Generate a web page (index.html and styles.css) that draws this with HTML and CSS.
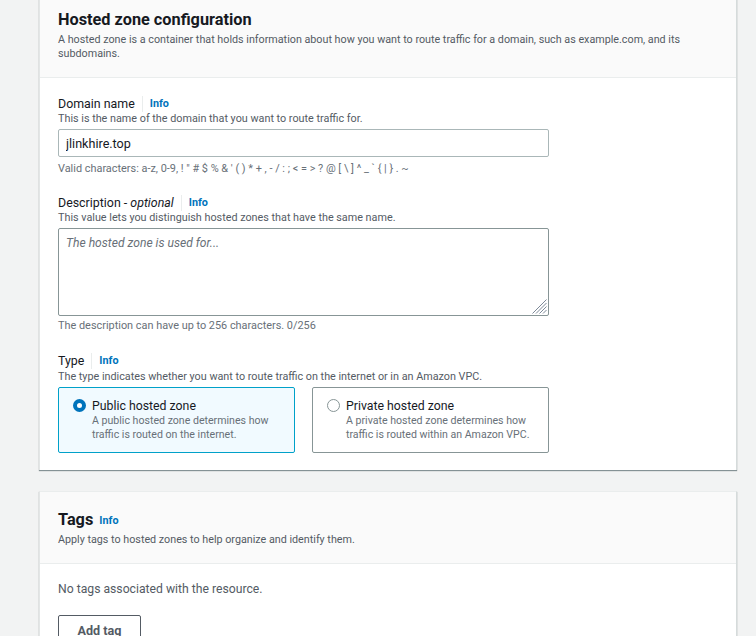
FILE: index.html
```html
<!DOCTYPE html>
<html>
<head>
<meta charset="utf-8">
<link rel="stylesheet" href="styles.css">
</head>
<body>
<div class="page">
  <section class="card card-first">
    <header class="card-header">
      <h2 class="card-title">Hosted zone configuration</h2>
      <p class="card-desc">A hosted zone is a container that holds information about how you want to route traffic for a domain, such as example.com, and its subdomains.</p>
    </header>
    <div class="card-body">
      <div class="field">
        <div class="label-row"><span class="label">Domain name</span><span class="info">Info</span></div>
        <div class="hint">This is the name of the domain that you want to route traffic for.</div>
        <input class="input" type="text" value="jlinkhire.top">
        <div class="constraint">Valid characters: a-z, 0-9, ! " # $ % &amp; ' ( ) * + , - / : ; &lt; = &gt; ? @ [ \ ] ^ _ ` { | } . ~</div>
      </div>
      <div class="field field-desc">
        <div class="label-row"><span class="label">Description - <i>optional</i></span><span class="info">Info</span></div>
        <div class="hint">This value lets you distinguish hosted zones that have the same name.</div>
        <div class="textarea-wrap">
          <textarea class="textarea" placeholder="The hosted zone is used for..."></textarea>
          <svg class="grip" width="16" height="16" viewBox="0 0 16 16"><g stroke="#7d8998" stroke-width="1"><line x1="15.5" y1="1.5" x2="1.5" y2="15.5"/><line x1="15.5" y1="5" x2="5" y2="15.5"/><line x1="15.5" y1="8.5" x2="8.5" y2="15.5"/><line x1="15.5" y1="12" x2="12" y2="15.5"/></g></svg>
        </div>
        <div class="constraint constraint-tight">The description can have up to 256 characters. 0/256</div>
      </div>
      <div class="field">
        <div class="label-row"><span class="label">Type</span><span class="info">Info</span></div>
        <div class="hint hint-type">The type indicates whether you want to route traffic on the internet or in an Amazon VPC.</div>
        <div class="tiles">
          <div class="tile tile-selected">
            <span class="radio radio-on"></span>
            <div class="tile-text">
              <div class="tile-title">Public hosted zone</div>
              <div class="tile-desc">A public hosted zone determines how traffic is routed on the internet.</div>
            </div>
          </div>
          <div class="tile">
            <span class="radio"></span>
            <div class="tile-text">
              <div class="tile-title">Private hosted zone</div>
              <div class="tile-desc">A private hosted zone determines how traffic is routed within an Amazon VPC.</div>
            </div>
          </div>
        </div>
      </div>
    </div>
  </section>

  <section class="card card-tags">
    <header class="card-header tags-header">
      <h2 class="card-title">Tags <span class="info info-title">Info</span></h2>
      <p class="card-desc">Apply tags to hosted zones to help organize and identify them.</p>
    </header>
    <div class="card-body tags-body">
      <div class="empty">No tags associated with the resource.</div>
      <button class="btn">Add tag</button>
    </div>
  </section>
</div>
</body>
</html>
```

FILE: styles.css
```css
* { box-sizing: border-box; }
html, body { margin: 0; padding: 0; }
body {
  background: #f2f3f3;
  font-family: Roboto, "Noto Sans", sans-serif;
  color: #16191f;
  height: 636px;
  overflow: hidden;
}
.page {
  padding-left: 39px;
  width: 737px;
}
.card {
  background: #fff;
  border-left: 1px solid #e3e6e6;
  border-right: 1px solid #d5dbdb;
  box-shadow: 0 1px 1px 0 rgba(0, 28, 36, 0.45);
}
.card-first {
  margin-top: -7px;
}
.card-header {
  background: #fafafa;
  border-bottom: 1px solid #eaeded;
  padding: 16px 18px 17px 18px;
}
.card-title {
  margin: 0;
  font-size: 16.3px;
  line-height: 22px;
  font-weight: 700;
  color: #16191f;
}
.card-desc {
  margin: 2px 0 0 0;
  font-size: 10.75px;
  line-height: 13.5px;
  color: #545b64;
  max-width: 640px;
}
.card-body {
  padding: 17px 18px 17px 18px;
}
.field { margin-bottom: 19px; }
.field-desc { margin-bottom: 20px; }
.field:last-child { margin-bottom: 0; }
.label-row {
  display: flex;
  align-items: center;
  height: 17px;
}
.label {
  font-size: 12.4px;
  line-height: 17px;
  color: #16191f;
}
.info {
  font-size: 10.8px;
  font-weight: 700;
  color: #0073bb;
  border-left: 1px solid #eaeded;
  margin-left: 7px;
  padding-left: 7px;
  line-height: 16px;
}
.hint {
  font-size: 10.8px;
  line-height: 13px;
  color: #545b64;
  margin-top: 0;
}
.hint-type { margin-top: 1px; }
.input {
  display: block;
  width: 491px;
  height: 28px;
  margin-top: 4px;
  border: 1px solid #aab7b8;
  border-radius: 2px;
  padding: 0 7px;
  font-family: inherit;
  font-size: 12.6px;
  color: #16191f;
  background: #fff;
  outline: none;
}
.constraint {
  font-size: 10.9px;
  line-height: 13px;
  color: #687078;
  margin-top: 5px;
}
.constraint-tight {
  margin-top: 3px;
}
.textarea-wrap {
  position: relative;
  width: 491px;
  height: 88px;
  margin-top: 4px;
}
.textarea {
  display: block;
  width: 491px;
  height: 88px;
  border: 1px solid #879596;
  border-radius: 2px;
  padding: 7px 7px;
  font-family: inherit;
  font-size: 12.1px;
  resize: none;
  outline: none;
  background: #fff;
}
.textarea::placeholder {
  color: #687078;
  font-style: italic;
  opacity: 1;
}
.grip {
  position: absolute;
  right: 2px;
  bottom: 2px;
}
.tiles {
  display: flex;
  gap: 17px;
  margin-top: 4px;
}
.tile {
  width: 237px;
  height: 66px;
  border: 1px solid #879596;
  border-radius: 2px;
  background: #fff;
  display: flex;
  align-items: flex-start;
  padding: 10px 14px;
  gap: 6px;
}
.tile-selected {
  background: #f1faff;
  border-color: #00a1c9;
}
.radio {
  flex: none;
  width: 13px;
  height: 13px;
  border-radius: 50%;
  border: 1px solid #879596;
  background: #fff;
  margin-top: 1px;
}
.radio-on {
  border: 4px solid #0073bb;
}
.tile-title {
  font-size: 12.3px;
  line-height: 16px;
  color: #16191f;
}
.tile-desc {
  font-size: 10.6px;
  line-height: 14px;
  color: #687078;
  margin-top: 0;
}
.card-tags {
  margin-top: 21px;
  border-top: 1px solid #eaeded;
}
.tags-header {
  padding: 17px 18px 16px 18px;
}
.info-title {
  border-left: none;
  margin-left: 2px;
  padding-left: 0;
  font-size: 10.8px;
  vertical-align: 1px;
}
.tags-body {
  padding: 16px 18px 20px 18px;
}
.empty {
  font-size: 12.2px;
  line-height: 18px;
  color: #545b64;
}
.btn {
  margin-top: 17px;
  width: 83px;
  height: 32px;
  border: 1px solid #545b64;
  border-radius: 2px;
  background: #fff;
  font-family: inherit;
  font-size: 12.6px;
  font-weight: 700;
  color: #545b64;
  padding: 0;
}
```
